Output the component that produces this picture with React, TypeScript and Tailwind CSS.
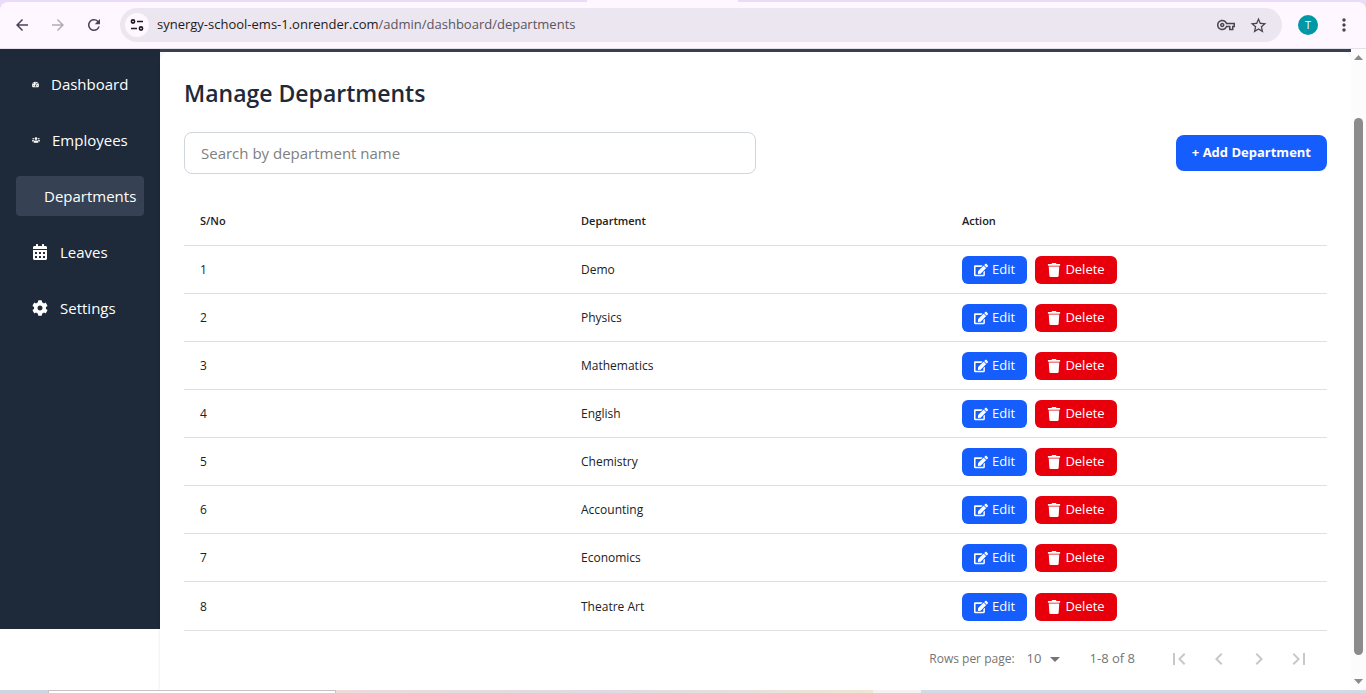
import { FaCalendarAlt, FaCog, FaEdit, FaTachometerAlt, FaTrash, FaUsers } from "react-icons/fa";
import {
  MdArrowDropDown,
  MdChevronLeft,
  MdChevronRight,
  MdFirstPage,
  MdLastPage,
  MdMoreVert,
  MdOutlineVpnKey,
  MdRefresh,
  MdStarOutline,
  MdArrowBack,
  MdArrowForward,
} from "react-icons/md";

const departments = ["Demo", "Physics", "Mathematics", "English", "Chemistry", "Accounting", "Economics", "Theatre Art"];

function TuneIcon() {
  return (
    <svg width="14" height="14" viewBox="0 0 14 14" fill="none" stroke="#1f1a24" strokeWidth="1.6" aria-hidden="true">
      <circle cx="3" cy="3.5" r="1.600" />
      <path d="M7 3.500h6M1 10.500h6" />
      <circle cx="11" cy="10.500" r="1.600" />
    </svg>
  );
}

function BrowserBar() {
  return (
    <header className="shrink-0 bg-[#eadcf8]">
      <div className="flex h-0.5">
        <div className="w-[43%]" />
        <div className="w-[11%] bg-[#fef7ff]" />
      </div>
      <div className="flex h-[47px] items-center rounded-t-lg border-b border-[#e6dfea] bg-[#fef7ff] px-3">
        <button aria-label="Back" className="mr-4 flex size-5 items-center justify-center text-[#4a4458]">
          <MdArrowBack size={18} />
        </button>
        <button aria-label="Forward" className="mr-4 flex size-5 items-center justify-center text-[#b3acb8]">
          <MdArrowForward size={18} />
        </button>
        <button aria-label="Reload" className="mr-4 flex size-5 items-center justify-center text-[#4a4458]">
          <MdRefresh size={18} />
        </button>
        <div className="flex h-[34px] flex-1 items-center rounded-full bg-[#ece6f0] pr-3.5 pl-[5px]">
          <button aria-label="Site information" className="flex size-6 items-center justify-center rounded-full bg-[#fef7ff]">
            <TuneIcon />
          </button>
          <p className="ml-2 flex-1 text-[13px] text-[#5a5561]">
            <span className="text-[#1d1b20]">synergy-school-ems-1.onrender.com</span>/admin/dashboard/departments
          </p>
          <button aria-label="Passwords" className="mr-3.5 text-[#49454f]">
            <MdOutlineVpnKey size={18} />
          </button>
          <button aria-label="Bookmark" className="text-[#49454f]">
            <MdStarOutline size={19} />
          </button>
        </div>
        <button
          aria-label="Profile"
          className="ml-4 flex size-5 items-center justify-center rounded-full bg-[#0097a7] text-[11px] text-white"
        >
          T
        </button>
        <button aria-label="Menu" className="ml-4 flex size-5 items-center justify-center text-[#49454f]">
          <MdMoreVert size={20} />
        </button>
      </div>
    </header>
  );
}

const link = "flex h-10 items-center rounded-sm px-4 text-[15px] text-white";

function Sidebar() {
  return (
    <nav className="flex h-[580px] w-40 shrink-0 flex-col gap-4 bg-[#1e2939] px-4 pt-[15px]">
      <a href="#dashboard" className={link}>
        <FaTachometerAlt size={7} className="mr-3 shrink-0" />
        Dashboard
      </a>
      <a href="#employees" className={link}>
        <FaUsers size={8} className="mr-3 shrink-0" />
        Employees
      </a>
      <a href="#departments" className="flex h-10 items-center rounded-sm bg-[#364153] pl-7 text-[15px] text-white">
        Departments
      </a>
      <a href="#leaves" className={link}>
        <FaCalendarAlt size={16} className="mr-3 shrink-0" />
        Leaves
      </a>
      <a href="#settings" className={link}>
        <FaCog size={16} className="mr-3 shrink-0" />
        Settings
      </a>
    </nav>
  );
}

function DepartmentTable() {
  return (
    <table className="mt-5 w-full table-fixed text-left text-[12px] text-[#212121]">
      <thead>
        <tr className="h-[51px] border-b border-[#e0e0e0] text-[11px]">
          <th className="px-4 pt-1 font-semibold">S/No</th>
          <th className="px-4 pt-1 font-semibold">Department</th>
          <th className="px-4 pt-1 font-semibold">Action</th>
        </tr>
      </thead>
      <tbody>
        {departments.map((name, i) => (
          <tr key={name} className="h-12 border-b border-[#e0e0e0] last:h-[49px]">
            <td className="px-4 pt-0.5">{i + 1}</td>
            <td className="px-4 pt-0.5">{name}</td>
            <td className="px-4 pt-0.5">
              <div className="flex gap-2 text-[13px] text-white">
                <button className="flex h-7 w-[65px] items-center justify-center gap-1 rounded-md bg-[#155dfc]">
                  <FaEdit size={14} />
                  Edit
                </button>
                <button className="flex h-7 w-[82px] items-center justify-center gap-1 rounded-md bg-[#e7000b]">
                  <FaTrash size={14} />
                  Delete
                </button>
              </div>
            </td>
          </tr>
        ))}
      </tbody>
    </table>
  );
}

const pager = "flex size-10 items-center justify-center text-[#c8c8c8]";

function Pagination() {
  return (
    <div className="flex h-14 items-center justify-end pr-2 text-[13px] text-[#757575]">
      <label htmlFor="rows" className="text-[12px]">Rows per page:</label>
      <div className="relative ml-3">
        <select id="rows" className="w-9 appearance-none bg-transparent outline-none" defaultValue="10">
          <option>10</option>
          <option>25</option>
          <option>50</option>
        </select>
        <MdArrowDropDown size={24} className="pointer-events-none absolute top-1/2 -right-1 -translate-y-1/2" />
      </div>
      <span className="mr-6 ml-[27px]">1-8 of 8</span>
      <button aria-label="First page" className={pager}><MdFirstPage size={24} /></button>
      <button aria-label="Previous page" className={pager}><MdChevronLeft size={24} /></button>
      <button aria-label="Next page" className={pager}><MdChevronRight size={24} /></button>
      <button aria-label="Last page" className={pager}><MdLastPage size={24} /></button>
    </div>
  );
}

function Scrollbar() {
  return (
    <div aria-hidden="true" className="flex w-[15px] shrink-0 flex-col items-center bg-[#fcfcfc] py-1.5 text-[#8b8b8b]">
      <svg width="9" height="5" viewBox="0 0 9 5"><path d="M0 5 4.500 0 9 5Z" fill="currentColor" /></svg>
      <div className="mt-[58px] mb-6 w-[9px] flex-1 rounded-full bg-[#8b8b8b]" />
      <svg width="9" height="5" viewBox="0 0 9 5"><path d="M0 0 4.500 5 9 0Z" fill="currentColor" /></svg>
    </div>
  );
}

export default function App() {
  return (
    <div className="flex min-h-screen flex-col bg-white font-['Open_Sans','Noto_Sans',sans-serif]">
      <BrowserBar />
      <div className="flex flex-1">
        <Sidebar />
        <div className="flex min-w-0 flex-1 flex-col border-t-[3px] border-[#364153] bg-[#f9f9fa]">
          <main className="flex-1 rounded-t-lg bg-white px-6 pt-6 shadow-sm">
            <h1 className="text-[23px] leading-[34px] font-semibold text-[#1e2939]">Manage Departments</h1>
            <div className="mt-[22px] flex items-center justify-between">
              <input
                type="text"
                aria-label="Search by department name"
                placeholder="Search by department name"
                className="h-[42px] w-1/2 rounded-lg border border-[#d1d5dc] px-4 text-[15px] placeholder:text-[#808080]"
              />
              <button className="h-9 rounded-lg bg-[#155dfc] px-4 text-[13px] font-bold text-white">
                + Add Department
              </button>
            </div>
            <DepartmentTable />
            <Pagination />
          </main>
        </div>
        <Scrollbar />
      </div>
      <footer className="flex h-[3px] shrink-0">
        <div className="w-12 bg-[#ccd6e2]" />
        <div className="w-72 border border-b-0 border-[#c4c4c4] bg-white" />
        <div className="flex-[537] bg-linear-to-r from-[#ecdcd9] via-[#dcdbe4] to-[#efe6d2]" />
        <div className="w-12 bg-[#f2f2f2]" />
        <div className="flex-[445] bg-[#d1dbe6]" />
      </footer>
    </div>
  );
}
